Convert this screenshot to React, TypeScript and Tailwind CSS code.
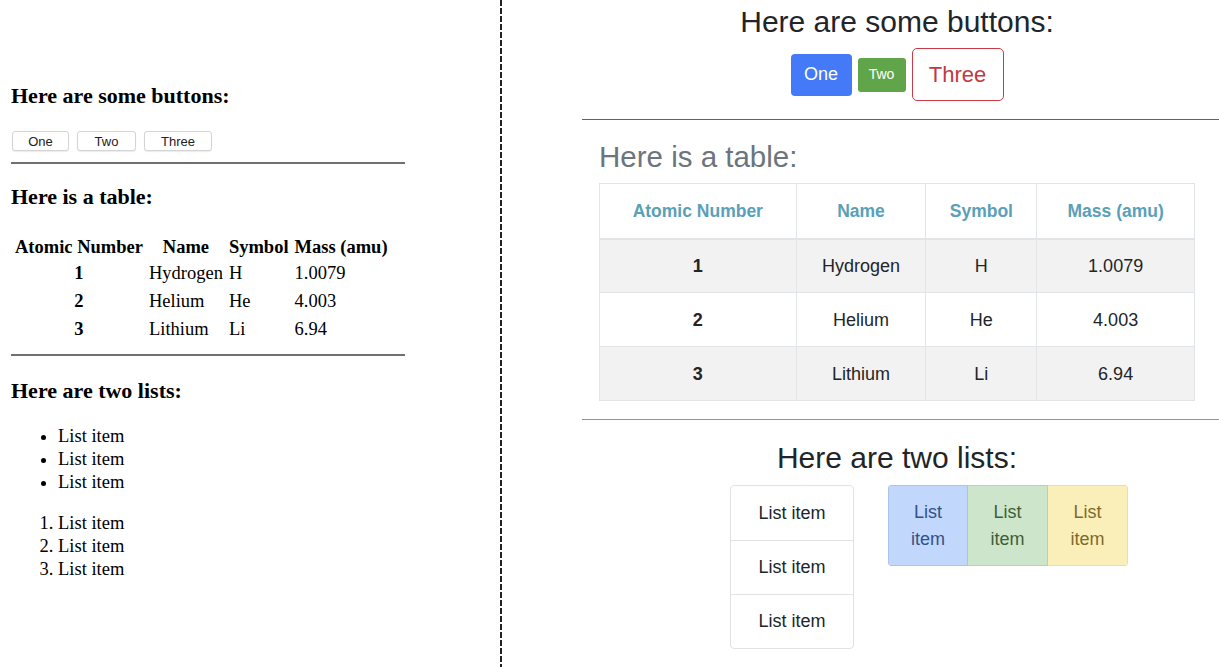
const rows = [
  { n: "1", name: "Hydrogen", sym: "H", mass: "1.0079" },
  { n: "2", name: "Helium", sym: "He", mass: "4.003" },
  { n: "3", name: "Lithium", sym: "Li", mass: "6.94" },
];

const serif = "font-['Liberation_Serif','Times_New_Roman',serif]";
const sans = "font-['Liberation_Sans',Arial,sans-serif]";

const PlainSide = () => {
  return (
    <div className={`w-[500px] shrink-0 ${serif} text-black`}>
      <div className="ml-[11px] w-[394px] pt-[83px]">
        <h3 className="text-[22px] font-bold leading-[25px]">Here are some buttons:</h3>
        <div className={`mt-[23px] flex gap-[8px] pl-px ${sans}`}>
          {["One", "Two", "Three"].map((b, i) => (
            <button
              key={b}
              className={`h-[20px] rounded-[3px] border border-[#d4d4d4] bg-white text-[13px] leading-none text-[#222] shadow-[0_1px_1px_rgba(0,0,0,0.08)] ${
                i === 0 ? "w-[57px]" : i === 1 ? "w-[59px]" : "w-[68px]"
              }`}
            >
              {b}
            </button>
          ))}
        </div>
        <div className="mt-[11px] h-[2px] bg-[#707070]" />

        <h3 className="mt-[20px] text-[22px] font-bold leading-[25px]">Here is a table:</h3>
        <table className="mt-[25px] border-separate border-spacing-[2px] text-[18.5px]">
          <thead>
            <tr className="leading-[20px]">
              <th className="px-[2px] py-px text-center">Atomic Number</th>
              <th className="px-[2px] py-px text-center">Name</th>
              <th className="px-[2px] py-px text-center">Symbol</th>
              <th className="px-[2px] py-px text-center">Mass (amu)</th>
            </tr>
          </thead>
          <tbody>
            {rows.map((r) => (
              <tr key={r.n} className="leading-[24px]">
                <th className="px-[2px] py-px text-center">{r.n}</th>
                <td className="px-[2px] py-px">{r.name}</td>
                <td className="px-[2px] py-px">{r.sym}</td>
                <td className="px-[2px] py-px">{r.mass}</td>
              </tr>
            ))}
          </tbody>
        </table>
        <div className="mt-[10px] h-[2px] bg-[#707070]" />

        <h3 className="mt-[22px] text-[22px] font-bold leading-[25px]">Here are two lists:</h3>
        <ul className="mt-[22px] list-disc pl-[47px] text-[18.5px] leading-[23px]">
          <li>List item</li>
          <li>List item</li>
          <li>List item</li>
        </ul>
        <ol className="mt-[18px] list-decimal pl-[47px] text-[18.5px] leading-[23px]">
          <li>List item</li>
          <li>List item</li>
          <li>List item</li>
        </ol>
      </div>
    </div>
  );
};

const StyledSide = () => {
  return (
    <div className={`ml-[80px] w-[637px] shrink-0 ${sans} text-[#212529]`}>
      <div className="w-[630px] pt-[4px]">
        <h2 className="text-center text-[30px] leading-[36px]">Here are some buttons:</h2>
        <div className="mt-[8px] flex items-center justify-center gap-[6px]">
          <button className="h-[42px] w-[61px] rounded-[4px] bg-[#447af8] text-[18px] text-white">One</button>
          <button className="h-[34px] w-[48px] rounded-[3px] bg-[#60a54a] text-[14px] text-white">Two</button>
          <button className="h-[53px] w-[92px] rounded-[5px] border border-[#c93a44] bg-white text-[22px] text-[#c13a3f]">
            Three
          </button>
        </div>
      </div>
      <div className="mt-[18px] h-px bg-[#c8373d]" />

      <div className="w-[630px]">
        <h2 className="ml-[17px] mt-[20px] text-[29.5px] leading-[34px] text-[#6c757d]">Here is a table:</h2>
        <table className="ml-[17px] mt-[9px] w-[596px] border-collapse text-[18px]">
          <thead>
            <tr className="h-[55px]">
              <th className="w-[197px] border border-b-2 border-[#e2e5e8] text-[17.5px] font-bold text-[#5aa0b8]">Atomic Number</th>
              <th className="w-[130px] border border-b-2 border-[#e2e5e8] text-[17.5px] font-bold text-[#5aa0b8]">Name</th>
              <th className="w-[111px] border border-b-2 border-[#e2e5e8] text-[17.5px] font-bold text-[#5aa0b8]">Symbol</th>
              <th className="w-[158px] border border-b-2 border-[#e2e5e8] text-[17.5px] font-bold text-[#5aa0b8]">Mass (amu)</th>
            </tr>
          </thead>
          <tbody>
            {rows.map((r, i) => (
              <tr key={r.n} className={`h-[54px] ${i % 2 === 0 ? "bg-[#f2f2f2]" : "bg-white"}`}>
                <th className="border border-[#e2e5e8] pt-px text-center font-bold">{r.n}</th>
                <td className="border border-[#e2e5e8] pt-px text-center">{r.name}</td>
                <td className="border border-[#e2e5e8] pt-px text-center">{r.sym}</td>
                <td className="border border-[#e2e5e8] pt-px text-center">{r.mass}</td>
              </tr>
            ))}
          </tbody>
        </table>
      </div>
      <div className="mt-[18px] h-px bg-[#6f95ec]" />

      <div className="w-[630px]">
        <h2 className="mt-[20px] text-center text-[30px] leading-[36px]">Here are two lists:</h2>
        <div className="mt-[9px] flex items-start gap-[34px] pl-[148px] text-[18px]">
          <ul className="w-[124px] rounded-[4px] border border-[#e2e2e2]">
            {[0, 1, 2].map((k) => (
              <li
                key={k}
                className={`flex h-[54px] items-center justify-center ${k > 0 ? "border-t border-[#e2e2e2]" : ""}`}
              >
                List item
              </li>
            ))}
          </ul>
          <ul className="flex overflow-hidden rounded-[4px] leading-[27px]">
            <li className="flex h-[81px] w-[80px] items-center justify-center border border-[#aac4ee] bg-[#c1d8fc] text-center text-[#34508a]">
              List
              <br />
              item
            </li>
            <li className="flex h-[81px] w-[80px] items-center justify-center border-y border-r border-[#b6d4b3] bg-[#cde6cb] text-center text-[#3c5e3a]">
              List
              <br />
              item
            </li>
            <li className="flex h-[81px] w-[80px] items-center justify-center border-y border-r border-[#eadfa6] bg-[#faefb9] text-center text-[#7d6a2f]">
              List
              <br />
              item
            </li>
          </ul>
        </div>
      </div>
    </div>
  );
};

export default function App() {
  return (
    <div className="flex h-[667px] w-[1219px] overflow-hidden bg-white">
      <PlainSide />
      <div className="h-full w-[2px] shrink-0 bg-[repeating-linear-gradient(to_bottom,#222_0_6px,transparent_6px_8px)]" />
      <StyledSide />
    </div>
  );
}
